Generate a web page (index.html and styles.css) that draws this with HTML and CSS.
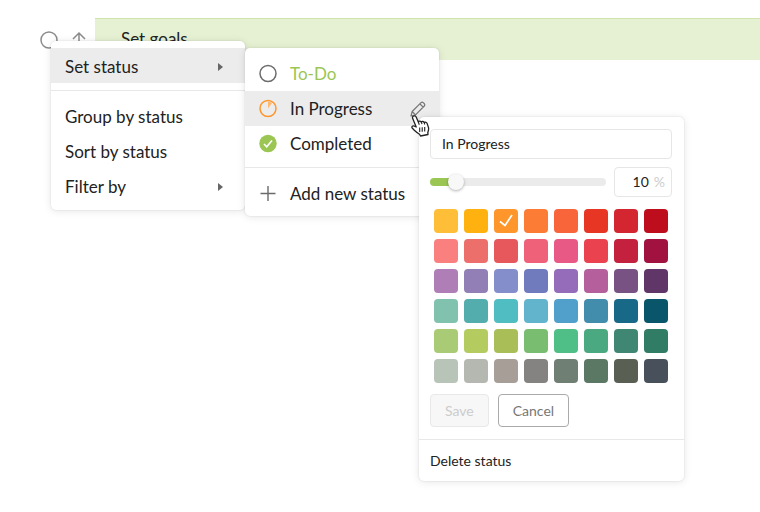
FILE: index.html
```html
<!DOCTYPE html>
<html lang="en">
<head>
<meta charset="utf-8">
<title>Task status</title>
<link rel="stylesheet" href="styles.css">
</head>
<body>
<main class="board">
  <div class="task">
    <div class="task-tools">
      <button class="tool" aria-label="Status"><svg width="20" height="20" viewBox="0 0 20 20"><circle cx="10" cy="10" r="8" fill="none" stroke="#8c8c8c" stroke-width="1.5"/></svg></button>
      <button class="tool" aria-label="Priority"><svg width="16" height="20" viewBox="0 0 16 20"><path d="M8 19V3M2 9l6-6 6 6" fill="none" stroke="#8c8c8c" stroke-width="1.5"/></svg></button>
    </div>
    <div class="task-name">Set goals</div>
  </div>

  <div class="menu status-menu">
    <button class="item active">Set status<svg class="caret" width="6" height="8" viewBox="0 0 6 8"><path d="M0 0l5 4-5 4z" fill="#666"/></svg></button>
    <hr>
    <button class="item">Group by status</button>
    <button class="item">Sort by status</button>
    <button class="item">Filter by<svg class="caret" width="6" height="8" viewBox="0 0 6 8"><path d="M0 0l5 4-5 4z" fill="#666"/></svg></button>
  </div>

  <div class="menu choice-menu">
    <button class="item todo"><svg width="20" height="20" viewBox="0 0 20 20"><circle cx="10" cy="9.500" r="8" fill="none" stroke="#6b6b6b" stroke-width="1.5"/></svg>To-Do</button>
    <button class="item active"><svg width="20" height="20" viewBox="0 0 20 20"><circle cx="10" cy="9.500" r="8" fill="none" stroke="#ff962b" stroke-width="1.5"/><path d="M10 9.500V2.700a6.800 6.800 0 0 1 4 1.300z" fill="#ffb872"/></svg>In Progress<svg class="pencil" width="16" height="16" viewBox="0 0 16 16"><path d="M1 15l1.200-4.500L11 1.700q1.200-1 2.500.2l.6.600q1.200 1.300.2 2.500L5.500 13.800zM2.200 10.500l3.300 3.300M10 3l3.200 3.200" fill="none" stroke="#757575" stroke-width="1.200" stroke-linejoin="round"/></svg></button>
    <button class="item"><svg width="20" height="20" viewBox="0 0 20 20"><circle cx="10" cy="9.500" r="8.700" fill="#9bc653"/><path d="M6 10l2.700 2.700L14 6.500" fill="none" stroke="#fff" stroke-width="1.600"/></svg>Completed</button>
    <hr>
    <button class="item"><svg width="20" height="20" viewBox="0 0 20 20"><path d="M10 2v15M2.500 9.500h15" fill="none" stroke="#6b6b6b" stroke-width="1.400"/></svg>Add new status</button>
  </div>

  <form class="editor">
    <div class="fields">
      <input class="name" type="text" value="In Progress" aria-label="Status name">
      <div class="progress">
        <input class="slider" type="range" min="0" max="100" value="10" aria-label="Progress">
        <label class="percent"><input type="text" value="10" aria-label="Progress percent"><span>%</span></label>
      </div>
      <div class="swatches" role="radiogroup" aria-label="Colour"></div>
      <div class="actions">
        <button type="button" class="save" disabled>Save</button>
        <button type="button" class="cancel">Cancel</button>
      </div>
    </div>
    <button type="button" class="delete">Delete status</button>
  </form>

  <svg class="pointer" width="20" height="22" viewBox="0 0 20 22" aria-hidden="true"><path d="M2.200 1.200C3.500.3 4.800 1 5.300 2.200L7.300 7c.6-1.200 2.300-1.200 3 .1.800-1 2.400-.8 2.900.5 1.200-.8 2.600-.3 3 1l1.300 4c.5 2-.3 3.600-.7 5L17 19.500 9.500 21l-1-1.800c-1.300-.7-3.400-2.200-5.200-3.900L1.200 13c-.8-1 .2-2.500 1.800-2l2.200 1L1.700 3.500C1.300 2.500 1.500 1.700 2.200 1.200z" fill="#fff" stroke="#222" stroke-width="1.300" stroke-linejoin="round"/><path d="M7.300 7l1 2.700M10.300 7.100l.7 2.100M13.200 7.600l.6 1.900M8.700 12.500v4.500M11.200 12.200v4.500M13.700 12v4.500" fill="none" stroke="#222" stroke-width="1.100"/></svg>
</main>
<script src="swatches.js"></script>
</body>
</html>
```
FILE: styles.css
```css
* { box-sizing: border-box; }
body { margin: 0; background: #fff; color: #222; font: 17px/20px Lato, "Liberation Sans", sans-serif; }
button, input { font: inherit; color: inherit; margin: 0; }
button { border: 0; background: none; padding: 0; text-align: left; }
svg { display: block; flex: none; }

.board { position: relative; min-height: 512px; padding-top: 18px; }
.task { display: flex; height: 42px; }
.task-tools { display: flex; flex: none; align-items: center; gap: 12px; width: 95px; padding: 2px 0 0 39px; }
.task-name { flex: 1; padding: 10px 26px; background: #e6f1d3; border-top: 1px solid #cfe5ab; }

.menu, .editor { position: absolute; background: #fff; border-radius: 5px; box-shadow: 0 0 2px rgba(0, 0, 0, .12), 0 1px 8px rgba(0, 0, 0, .1); }
.menu { width: 194px; padding: 7px 0 6px; }
.status-menu { left: 51px; top: 41px; }
.choice-menu { left: 245px; top: 48px; padding: 8px 0 5px; }
.item { display: flex; align-items: center; width: 100%; height: 35px; padding: 0 14px; gap: 12px; white-space: nowrap; }
.choice-menu .item { padding: 0 13px; }
.active { background: #ececec; }
.status-menu .active { padding-top: 2px; }
.todo { color: #9bc653; }
.caret { margin: 0 7px 0 auto; }
.pencil { margin-left: auto; }
.menu hr { height: 1px; margin: 7px 0 8px; border: 0; background: #e8e8e8; }
.choice-menu hr { margin-top: 6px; }

.editor { left: 419px; top: 117px; width: 265px; font-size: 14px; }
.fields { display: flex; flex-direction: column; padding: 12px 12px 12px 11px; gap: 8px; border-bottom: 1px solid #e8e8e8; }
.name, .percent { height: 30px; border: 1px solid #e6e6e6; border-radius: 4px; background: #fff; }
.name { width: 100%; padding: 0 12px 2px 11px; }
.progress { display: flex; align-items: center; gap: 8px; }
.slider { appearance: none; flex: 1; min-width: 0; height: 8px; padding: 0 0 0 2px; border-radius: 4px; background: linear-gradient(to right, #9bc653 26px, #ebebeb 26px); }
.slider::-webkit-slider-thumb { appearance: none; width: 16px; height: 16px; border-radius: 50%; background: #f8f8f8; box-shadow: 0 1px 3px rgba(0, 0, 0, .3); }
.percent { display: flex; align-items: center; width: 58px; padding: 0 6px; gap: 5px; }
.percent input { flex: 1; min-width: 0; padding: 0; border: 0; text-align: right; background: none; }
.percent span { color: #ccc; }
.swatches { display: grid; grid-template-columns: repeat(8, 24px); gap: 6px; margin: 4px 4px 3px; }
.swatch { position: relative; height: 24px; border-radius: 4px; }
.swatch input { appearance: none; display: block; width: 24px; height: 24px; }
.swatch svg { position: absolute; inset: 0; }
.actions { display: flex; gap: 9px; }
.actions button { height: 33px; padding: 0 14px; border: 1px solid #aaa; border-radius: 4px; color: #777; }
.actions .save { border-color: #e8e8e8; background: #f7f7f7; color: #ccc; }
.delete { display: block; width: 100%; height: 41px; padding: 0 11px; }

.pointer { position: absolute; left: 411px; top: 115px; }
```
FILE: swatches.js
```js
const colors = [
  '#ffbe37', '#ffb20f', '#ff962b', '#fc7b35', '#f8653b', '#e73623', '#d32630', '#be0d1c',
  '#f9807f', '#ec6f6c', '#e6585c', '#ef6079', '#e85985', '#ea424f', '#c4213e', '#a11240',
  '#b07eb6', '#927fb5', '#838eca', '#6f7bbd', '#946cb9', '#b5609c', '#785283', '#603567',
  '#80c2ad', '#54adad', '#50bdc2', '#61b4cc', '#51a0cb', '#428cac', '#186888', '#09566a',
  '#a9cb76', '#b4cb60', '#a9be56', '#79bd71', '#50be87', '#4aa980', '#408773', '#307c65',
  '#b9c4b9', '#b5b7b1', '#a79e97', '#858381', '#6f7f73', '#5b7865', '#595f52', '#48515b'
];
const selected = '#ff962b';
const check = '<svg width="24" height="24" viewBox="0 0 24 24"><path d="M6 12.500l5 4L18 6" fill="none" stroke="#fff" stroke-width="1.700"/></svg>';

document.querySelector('.swatches').innerHTML = colors.map(color => {
  const on = color === selected;
  return `<label class="swatch" style="background:${color}"><input type="radio" name="color" value="${color}" aria-label="${color}"${on ? ' checked' : ''}>${on ? check : ''}</label>`;
}).join('');
```
